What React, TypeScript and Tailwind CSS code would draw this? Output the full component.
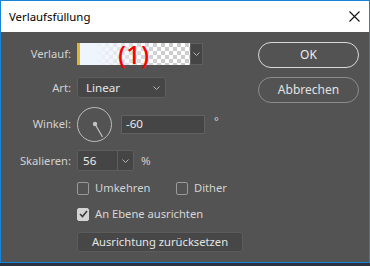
const font = { fontFamily: '"Noto Sans", "Open Sans", sans-serif' };

const Chevron = () => (
  <svg width="7" height="4" viewBox="0 0 7 4" className="shrink-0">
    <polyline points="0.5,0.5 3.5,3.5 6.5,0.5" fill="none" stroke="#b4b4b4" strokeWidth="1" />
  </svg>
);

const Check = ({ checked }: { checked?: boolean }) => (
  <div
    className={`w-[12px] h-[13px] rounded-[2px] border shrink-0 flex items-center justify-center ${
      checked ? "bg-[#d4d4d4] border-[#d4d4d4]" : "border-[#9a9a9a]"
    }`}
  >
    {checked && (
      <svg width="9" height="8" viewBox="0 0 9 8">
        <polyline points="1,4 3.5,6.5 8,1" fill="none" stroke="#3a3a3a" strokeWidth="1.6" />
      </svg>
    )}
  </div>
);

const Label = ({ children }: { children: React.ReactNode }) => (
  <div className="w-[70px] text-right shrink-0 text-[#d2d2d2]">{children}</div>
);

export default function App() {
  return (
    <div className="w-[370px] h-[266px] bg-[#2b3440] text-[11.2px] leading-none" style={font}>
      <div className="h-[263px] border border-[#1883d7] flex flex-col">
        {/* title bar */}
        <div className="h-[31px] bg-white flex items-center justify-between pl-[8px] pr-[9px] shrink-0">
          <span className="text-[11.4px] text-black">Verlaufsfüllung</span>
          <svg width="11" height="11" viewBox="0 0 11 11">
            <path d="M0.5 0.5 L10.5 10.5 M10.5 0.5 L0.5 10.5" stroke="#111" strokeWidth="1.1" />
          </svg>
        </div>

        <div className="flex-1 bg-[#535353] flex">
          {/* form */}
          <div className="flex-1 flex flex-col">
            <div className="flex items-center gap-[6px] mt-[11px] h-[22px]">
              <Label>Verlauf:</Label>
              <div className="flex h-[22px]">
                <div className="relative w-[113px] h-full bg-[image:conic-gradient(#cdcdcd_25%,#ffffff_0_50%,#cdcdcd_0_75%,#ffffff_0)] bg-[length:8px_8px]">
                  <div className="absolute inset-0 bg-linear-to-r from-[#eef5fc] from-15% to-transparent to-75%" />
                  <div className="absolute left-0 top-0 bottom-0 w-[3px] bg-[#e2b52e]" />
                  <div className="absolute inset-0 flex items-center justify-center">
                    <span className="text-[26px] leading-none text-[#ff0000] font-medium" style={font}>
                      (1)
                    </span>
                  </div>
                </div>
                <div className="w-[13px] h-full bg-[#454545] border border-[#5f5f5f] flex items-center justify-center">
                  <Chevron />
                </div>
              </div>
            </div>

            <div className="flex items-center gap-[6px] mt-[12px] h-[21px]">
              <Label>Art:</Label>
              <div className="w-[89px] h-[21px] bg-[#464646] border border-[#5e5e5e] rounded-[3px] flex items-center justify-between pl-[8px] pr-[5px]">
                <span className="text-[#e6e6e6] text-[11.6px]">Linear</span>
                <Chevron />
              </div>
            </div>

            <div className="flex items-center gap-[6px] mt-[8px] h-[36px]">
              <Label>Winkel:</Label>
              <div className="w-[35px] h-[35px] rounded-full border-[1.5px] border-[#bdbdbd] shrink-0 flex items-center justify-center">
                <svg width="32" height="32" viewBox="0 0 32 32">
                  <circle cx="16" cy="16" r="2.2" fill="#c4c4c4" />
                  <line x1="16" y1="16" x2="23.5" y2="29" stroke="#c4c4c4" strokeWidth="1.2" />
                </svg>
              </div>
              <div className="ml-[3px] w-[84px] h-[19px] bg-[#454545] border border-[#616161] flex items-center pl-[4px] text-[#ececec] text-[11.6px]">
                -60
              </div>
              <span className="ml-[3px] text-[#d2d2d2] -mt-[6px]">°</span>
            </div>

            <div className="flex items-center gap-[6px] mt-[8px] h-[21px]">
              <Label>Skalieren:</Label>
              <div className="w-[57px] h-[21px] bg-[#454545] border border-[#5e5e5e] rounded-[2px] flex">
                <div className="w-[40px] flex items-center pl-[5px] text-[#ececec] text-[11.6px] border-r border-[#5e5e5e]">56</div>
                <div className="flex-1 flex items-center justify-center">
                  <Chevron />
                </div>
              </div>
              <span className="ml-[1px] text-[#d2d2d2] text-[11.6px]">%</span>
            </div>

            <div className="flex items-center mt-[10px] h-[14px] pl-[76px] text-[#d2d2d2]">
              <div className="w-[99px] flex items-center gap-[6px]">
                <Check />
                <span>Umkehren</span>
              </div>
              <div className="flex items-center gap-[6px]">
                <Check />
                <span>Dither</span>
              </div>
            </div>

            <div className="flex items-center gap-[6px] mt-[12px] h-[14px] pl-[76px] text-[#d8d8d8]">
              <Check checked />
              <span>An Ebene ausrichten</span>
            </div>

            <div className="mt-[11px] ml-[76px] w-[166px] h-[20px] bg-[#474747] border border-[#5c5c5c] rounded-[3px] flex items-center justify-center text-[#e4e4e4]">
              Ausrichtung zurücksetzen
            </div>
          </div>

          {/* buttons */}
          <div className="w-[101px] mr-[10px] mt-[10px] flex flex-col gap-[9px]">
            <div className="h-[26px] rounded-full border border-[#d9d9d9] flex items-center justify-center text-[#ececec] text-[12px]">
              OK
            </div>
            <div className="h-[26px] rounded-full border border-[#8c8c8c] flex items-center justify-center text-[#e2e2e2] text-[12px]">
              Abbrechen
            </div>
          </div>
        </div>
      </div>
    </div>
  );
}
